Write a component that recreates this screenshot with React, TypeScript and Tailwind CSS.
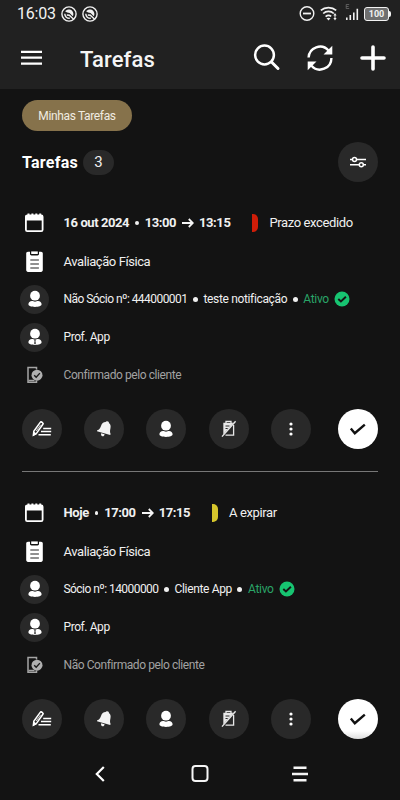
import type { ReactNode } from 'react'

interface Task {
  id: number
  date: string
  start: string
  end: string
  statusLabel: string
  statusColor: string
  title: string
  client: string
  clientName: string
  staff: string
  confirmation: string
}

const TASKS: Task[] = [
  {
    id: 1,
    date: '16 out 2024',
    start: '13:00',
    end: '13:15',
    statusLabel: 'Prazo excedido',
    statusColor: 'bg-[#cf1d08]',
    title: 'Avaliação Física',
    client: 'Não Sócio nº: 444000001',
    clientName: 'teste notificação',
    staff: 'Prof. App',
    confirmation: 'Confirmado pelo cliente',
  },
  {
    id: 2,
    date: 'Hoje',
    start: '17:00',
    end: '17:15',
    statusLabel: 'A expirar',
    statusColor: 'bg-[#d6c62c]',
    title: 'Avaliação Física',
    client: 'Sócio nº: 14000000',
    clientName: 'Cliente App',
    staff: 'Prof. App',
    confirmation: 'Não Confirmado pelo cliente',
  },
]

function AppBadgeIcon() {
  return (
    <svg width="16" height="16" viewBox="0 0 16 16" fill="none">
      <circle cx="8" cy="8" r="7.1" stroke="#f2f2f2" strokeWidth="1.4" />
      <path d="M4.200 5.400C6 3 10 2.900 11.600 5.400c1 1.600 1 3.300.2 4.800L8.600 7 6.200 6.600z" fill="#f2f2f2" />
      <path d="M3.800 7.800c0 2.800 2.200 4.700 5 4.500M5.800 9l2.500.2 4.300 4.100" stroke="#f2f2f2" strokeWidth="1.400" />
    </svg>
  )
}

function StatusBar() {
  return (
    <div className="flex h-7 items-center pl-[17px] pr-[9px] text-[#f2f2f2]">
      <span className="w-[39px] text-base leading-7 tracking-[-0.2px]">16:03</span>
      <div className="ml-[5px] flex gap-[5px] pb-px">
        <AppBadgeIcon />
        <AppBadgeIcon />
      </div>
      <svg className="ml-auto" width="16" height="16" viewBox="0 0 16 16" fill="none" stroke="#f2f2f2">
        <circle cx="8" cy="7.500" r="6.800" strokeWidth="1.400" />
        <path d="M4 7.500h8" strokeWidth="1.800" />
      </svg>
      <svg className="ml-[5px]" width="18" height="16" viewBox="0 0 18 16" fill="none" stroke="#f2f2f2" strokeWidth="1.700">
        <path d="M.8 4.300C5 .6 12 .6 16.200 4.300M3.200 7.500c3-2.800 7.600-2.800 10.600 0M5.600 10.600c1.800-1.500 4-1.500 5.600-.2" />
        <path d="m8.500 14.500-2-2.200c1.200-.9 2.800-.9 4 0z" fill="#f2f2f2" stroke="none" />
        <path d="m15 7 1.600 2.400h-3.200zM15 14.400l1.600-2.400h-3.200z" fill="#f2f2f2" stroke="none" />
        <path d="M15 9v4" strokeWidth="1" />
      </svg>
      <svg className="ml-[7px]" width="14" height="20" viewBox="0 0 14 20" fill="none" stroke="#f2f2f2" strokeWidth="1.600">
        <path d="M1.800 16v-2.400M5.300 16v-5M8.800 16V8.400M12.300 16V4.800" />
        <path d="M4.200 0.500H1.200v4h3M1.200 2.500h2.400" stroke="#6b6b6b" strokeWidth=".8" />
      </svg>
      <div className="ml-[5px] flex h-[14px] w-[25px] items-center justify-center rounded-[3px] border-[1.5px] border-[#f2f2f2] bg-[#6f6f6f] text-[9px] font-bold leading-none">
        100
      </div>
      <div className="h-[6px] w-[2px] rounded-r-sm bg-[#f2f2f2]" />
    </div>
  )
}

function Header() {
  return (
    <header className="h-[89px] bg-[#212121]">
      <StatusBar />
      <div className="flex h-[60px] items-center pl-[21px] pr-[14px]">
        <svg width="21" height="16" viewBox="0 0 21 16" stroke="#fff" strokeWidth="2.200">
          <path d="M0 1.800h21M0 7.700h21M0 13.600h21" />
        </svg>
        <h1 className="ml-[38px] mt-[3px] text-[22px] font-medium leading-7 tracking-[0.1px] text-[#f5f5f5]">Tarefas</h1>
        <svg className="ml-auto" width="28" height="28" viewBox="0 0 28 28" fill="none" stroke="#fff" strokeLinecap="round">
          <circle cx="11.500" cy="11" r="9.400" strokeWidth="2.500" />
          <path d="m18.500 18 6.500 6.500" strokeWidth="3" />
        </svg>
        <svg className="ml-[25px]" width="28" height="28" viewBox="0 0 28 28" fill="none" stroke="#fff" strokeWidth="2.400">
          <path d="M2.600 13.500A11.400 11.400 0 0 1 22.500 6.500M25.400 14A11.400 11.400 0 0 1 5.500 21.700" />
          <path d="M26.300 1.800v8.800h-8.800zM1.700 26.200v-8.800h8.800z" fill="#fff" stroke="none" />
        </svg>
        <svg className="ml-[26px]" width="26" height="26" viewBox="0 0 26 26" stroke="#fff" strokeWidth="3.600" strokeLinecap="round">
          <path d="M13 2v22M2 13h22" />
        </svg>
      </div>
    </header>
  )
}

function CalendarIcon() {
  return (
    <svg width="21" height="20" viewBox="0 0 21 20" fill="none">
      <rect x="1.900" y="2.400" width="16.700" height="15.700" rx="1.400" stroke="#fff" strokeWidth="1.800" />
      <path d="M1.500 2.300h17.500v5.200H1.500zM3.500.6h2v2h-2zM7.400.6h2v2h-2zM11.300.6h2v2h-2zM15.200.6h2v2h-2z" fill="#fff" />
    </svg>
  )
}

function ClipboardIcon() {
  return (
    <svg width="18" height="22" viewBox="0 0 18 22">
      <path d="M2 .8h2v2c0 1 .6 1.600 1.500 1.600h6c.9 0 1.500-.6 1.500-1.600v-2h2c1.100 0 1.800.7 1.800 1.800v16.500c0 1.100-.7 1.800-1.800 1.800H2c-1.100 0-1.800-.7-1.800-1.800V2.600C.2 1.500.9.8 2 .8z" fill="#fff" />
      <path d="M5.200.4h6.600V3H5.200z" fill="#fff" />
      <path d="M4.300 9h8.600M4.300 13h8.600M4.300 17h8.600" stroke="#222" strokeWidth="1.200" />
    </svg>
  )
}

function PersonIcon({ tie = false }: { tie?: boolean }) {
  return (
    <svg width="14" height="18" viewBox="0 0 14 18">
      <circle cx="7" cy="5.700" r="4.900" fill="#fff" />
      <path d="M.4 14.300c0-2 1.500-3.300 3.600-3.300.8 0 1.800.7 3 .7s2.200-.7 3-.7c2.100 0 3.600 1.300 3.600 3.300 0 1.700-2.900 2.600-6.600 2.600S.4 16 .4 14.300z" fill="#fff" />
      {tie && <path d="m6.200 12 .8-.5.800.5-.4 1 .4 2.600-.8 1-.8-1 .4-2.600z" fill="#222" />}
    </svg>
  )
}

function PhoneCheckIcon() {
  return (
    <svg width="16" height="18" viewBox="0 0 16 18" fill="none">
      <path d="M9.500 14.500v1.700H1V1.500h8.500v2" stroke="#a5a5a5" strokeWidth="1.500" />
      <path d="M1.500 14.500h6" stroke="#a5a5a5" strokeWidth="1.500" />
      <circle cx="10" cy="9.200" r="5.500" fill="#b0b0b0" />
      <path d="m7.200 9.200 2 2.100 3.700-4.200" stroke="#1b1b1b" strokeWidth="1.400" />
    </svg>
  )
}

function ArrowIcon() {
  return (
    <svg width="12" height="11" viewBox="0 0 12 11" fill="none" stroke="#f5f5f5" strokeWidth="1.800">
      <path d="M0 5h10.500M6.800 1l4 4-4 4" />
    </svg>
  )
}

function ActiveIcon() {
  return (
    <svg width="16" height="16" viewBox="0 0 16 16" fill="none">
      <circle cx="8" cy="8" r="7.500" fill="#17c471" />
      <path d="m4.300 8 2.600 2.500 5-4.800" stroke="#151515" strokeWidth="1.900" />
    </svg>
  )
}

function EditListIcon() {
  return (
    <svg width="20" height="18" viewBox="0 0 20 18" fill="none">
      <path d="M1.800 11.200 8.200 2.400c1-1.300 3.600.4 2.700 1.900l-6.300 9-3.200 1.800z" stroke="#fff" strokeWidth="1.500" />
      <path d="m1.400 15.400.2-3.400 2.900 1.900zM8.600 1.600l3 2.100" fill="#fff" stroke="#fff" strokeWidth=".9" />
      <path d="m4.200 11 4.400-6.200" stroke="#fff" strokeWidth=".8" />
      <path d="M11.200 8.500h8M9 11.500h10.200M6.500 14.800h12.300" stroke="#fff" strokeWidth="1.600" />
    </svg>
  )
}

function BellIcon() {
  return (
    <svg width="18" height="18" viewBox="0 0 18 18" fill="#f2f2f2">
      <path d="M12.200 1.300c1.200.1 1.900.8 1.700 1.700 1.700 1.200 2 3 1.600 5-.5 2.300-.8 4 .1 6l-.4.900L2 11.200l.2-1c2.100-.7 3-2 3.800-4.300.8-2.200 2.300-3.800 4.600-3.800.3-.6.900-.9 1.600-.8z" />
      <path d="M6.100 13.200 9.600 14.300c-.3 1.700-1.200 2.300-2.200 2-1-.3-1.600-1.500-1.300-3.100z" />
    </svg>
  )
}

function NoClipboardIcon() {
  return (
    <svg width="16" height="18" viewBox="0 0 16 18" fill="none">
      <path d="M2.300 2.800h10.200L2.300 14.500z" fill="#e8e8e8" />
      <path d="M5 1.400h5v2.200H5zM12.600 5v10.200H4.500" stroke="#e8e8e8" strokeWidth="1.300" />
      <path d="M4.500 6h4M4.500 8.500h2.200" stroke="#292929" />
      <path d="M1 16.600 14.600 1.200" stroke="#e8e8e8" strokeWidth="1.400" />
    </svg>
  )
}

function RoundButton({ label, children }: { label: string; children: ReactNode }) {
  return (
    <button aria-label={label} className="flex size-10 items-center justify-center rounded-full bg-[#292929]">
      {children}
    </button>
  )
}

function Row({ icon, className, children }: { icon: ReactNode; className: string; children: ReactNode }) {
  return (
    <div className={`flex items-center ${className}`}>
      <div className="-ml-0.5 mr-[14.5px] flex w-[29px] shrink-0 items-center justify-center">{icon}</div>
      {children}
    </div>
  )
}

function Avatar({ children }: { children: ReactNode }) {
  return <div className="flex size-[29px] items-center justify-center rounded-full bg-[#292929]">{children}</div>
}

function Dot() {
  return <span className="mx-[5.5px] size-[5px] shrink-0 rounded-full bg-[#f0f0f0]" />
}

function TaskCard({ task, last }: { task: Task; last: boolean }) {
  return (
    <article className="whitespace-nowrap text-[#f0f0f0]">
      <Row icon={<CalendarIcon />} className="h-10 text-[13px] tracking-[-0.42px]">
        <span className="font-bold">{task.date}</span>
        <span className="mx-[6px] size-[3.5px] rounded-full bg-[#f0f0f0]" />
        <span className="mr-[6px] font-bold">{task.start}</span>
        <ArrowIcon />
        <span className="ml-[5px] font-bold">{task.end}</span>
        <span className={`ml-[22px] h-[18px] w-[6px] rounded-r-[5px] ${task.statusColor}`} />
        <span className="ml-[11px] tracking-[-0.38px]">{task.statusLabel}</span>
      </Row>
      <Row icon={<ClipboardIcon />} className="h-[37px] text-[13px] tracking-[-0.42px]">{task.title}</Row>
      <Row icon={<Avatar><PersonIcon /></Avatar>} className="h-[38px] text-xs">
        <span className="tracking-[-0.55px]">{task.client}</span>
        <Dot />
        <span className="tracking-[-0.34px]">{task.clientName}</span>
        <Dot />
        <span className="mr-[5px] tracking-[-0.3px] text-[#2aa468]">Ativo</span>
        <ActiveIcon />
      </Row>
      <Row icon={<Avatar><PersonIcon tie /></Avatar>} className="h-[38px] text-xs tracking-[-0.42px]">{task.staff}</Row>
      <Row icon={<PhoneCheckIcon />} className="h-[38px] text-xs tracking-[-0.42px] text-[#a2a2a2]">{task.confirmation}</Row>

      <div className="mt-[15px] flex items-center gap-[22.2px]">
        <RoundButton label="Editar"><EditListIcon /></RoundButton>
        <RoundButton label="Notificar"><BellIcon /></RoundButton>
        <RoundButton label="Cliente"><PersonIcon /></RoundButton>
        <RoundButton label="Cancelar"><NoClipboardIcon /></RoundButton>
        <RoundButton label="Mais">
          <svg width="4" height="14" viewBox="0 0 4 14" fill="#fff">
            <circle cx="2" cy="2" r="1.600" />
            <circle cx="2" cy="7" r="1.600" />
            <circle cx="2" cy="12" r="1.600" />
          </svg>
        </RoundButton>
        <button
          aria-label="Concluir"
          className={`ml-auto flex size-10 items-center justify-center rounded-full ${last ? 'bg-linear-to-b from-white from-80% to-[#dedede]' : 'bg-white'}`}
        >
          <svg width="18" height="14" viewBox="0 0 18 14" fill="none" stroke="#111" strokeWidth="2.400">
            <path d="m1.800 6.500 4 4.700 10-8.600" />
          </svg>
        </button>
      </div>
    </article>
  )
}

function NavBar() {
  return (
    <nav className="mt-auto flex h-[52px] items-center justify-around px-[50px] pb-px">
      <svg width="20" height="20" viewBox="0 0 20 20" fill="none" stroke="#fff" strokeWidth="2.200">
        <path d="m13.800 3-7 7 7 7" />
      </svg>
      <svg width="20" height="20" viewBox="0 0 20 20" fill="none" stroke="#f5f5f5" strokeWidth="2">
        <rect x="2.500" y="2" width="15" height="15" rx="3" />
      </svg>
      <svg width="20" height="20" viewBox="0 0 20 20" stroke="#f5f5f5" strokeWidth="2.400">
        <path d="M3.500 3.800h13M2 10h16M3.500 16.200h13" />
      </svg>
    </nav>
  )
}

export default function App() {
  return (
    <div className="flex h-[800px] w-[400px] flex-col overflow-hidden bg-[#131313] font-['Roboto',sans-serif]">
      <Header />
      <main className="px-[22px] pt-[11px]">
        <button className="flex h-[31px] w-[110px] items-center justify-center rounded-full bg-[#86724b] pt-px text-xs tracking-[-0.36px] text-[#f0ece2]">
          Minhas Tarefas
        </button>
        <div className="mt-[11px] flex h-10 items-center">
          <h2 className="pt-[2px] text-[16px] font-bold tracking-[0.25px] text-white">Tarefas</h2>
          <span className="ml-[5px] flex h-[25px] w-[31px] items-center justify-center rounded-full bg-[#292929] pt-px text-[15px] text-[#f0f0f0]">
            3
          </span>
          <button aria-label="Filtrar" className="ml-auto flex size-10 items-center justify-center rounded-full bg-[#292929]">
            <svg width="16" height="12" viewBox="0 0 16 12" fill="none" stroke="#fff" strokeWidth="1.500">
              <path d="M0 3.500h2.300M6.600 3.500H16M0 8.700h9M13.500 8.700H16" />
              <circle cx="4.500" cy="3.500" r="2" />
              <circle cx="11.300" cy="8.700" r="2" />
            </svg>
          </button>
        </div>
        <div className="mt-[21px]">
          <TaskCard task={TASKS[0]} last={false} />
          <div className="mb-[21px] mt-[22px] h-px bg-[#777]" />
          <TaskCard task={TASKS[1]} last />
        </div>
      </main>
      <NavBar />
    </div>
  )
}
